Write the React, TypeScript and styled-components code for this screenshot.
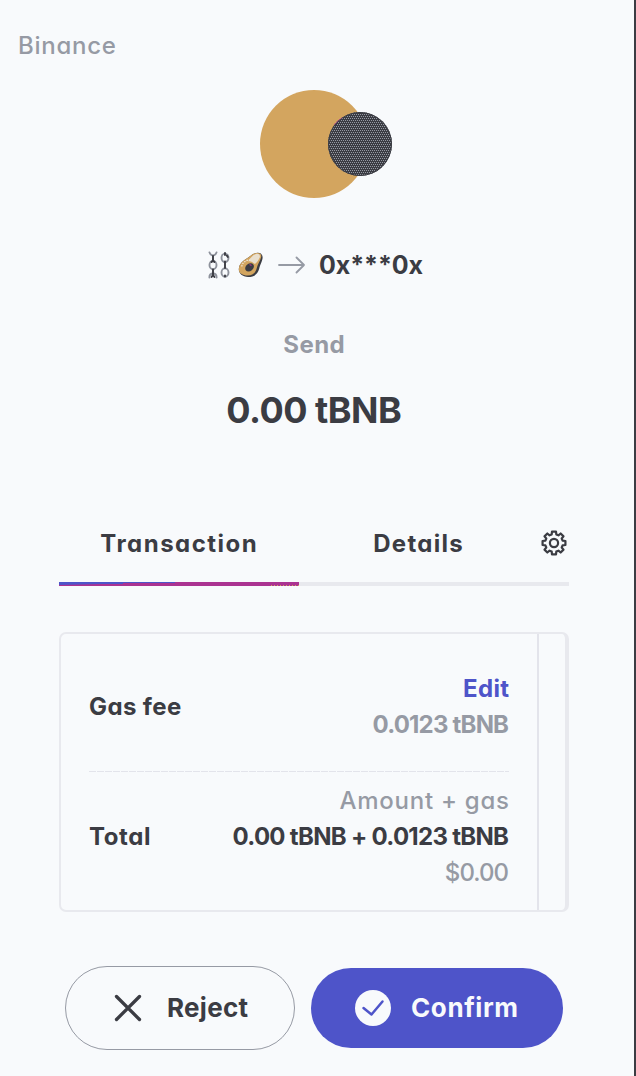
import React from "react";
import styled, { createGlobalStyle } from "styled-components";

const c = {
  bg: "#f8fafc",
  ink: "#3b3c43",
  muted: "#969aa4",
  line: "#e3e4eb",
  soft: "#e8e9ee",
  blue: "#4e54c9",
  pink: "#ab3391",
  gold: "#d3a55f",
};

const GlobalStyle = createGlobalStyle`
  * { box-sizing: border-box; }
  body { margin: 0; background: ${c.bg}; }
`;

const Page = styled.main`
  width: 636px;
  height: 1076px;
  padding: 28px 0 0;
  border-right: 2px solid ${c.ink};
  background: ${c.bg};
  color: ${c.ink};
  font-family: Inter, "Liberation Sans", sans-serif;
  font-feature-settings: "cv11";
  overflow: hidden;
`;

const Text = styled.span<{ $size?: number; $weight?: number; $track?: number; $color?: string; $line?: number }>`
  display: block;
  font-size: ${(p) => p.$size ?? 24}px;
  font-weight: ${(p) => p.$weight ?? 700};
  letter-spacing: ${(p) => p.$track ?? 0}px;
  margin-right: ${(p) => -(p.$track ?? 0)}px;
  color: ${(p) => p.$color ?? c.ink};
  line-height: ${(p) => p.$line ?? 36}px;
  white-space: nowrap;
`;

const Network = styled.header`
  padding-left: 18px;
`;

const Column = styled.section`
  width: 510px;
  margin-left: 59px;
  display: flex;
  flex-direction: column;
  align-items: center;
`;

const Avatar = styled.svg`
  display: block;
  margin: 26px 0 0 24px;
`;

const Route = styled.div`
  display: flex;
  align-items: center;
  height: 36px;
  margin-top: 49px;
  align-self: flex-start;
  padding-left: 149px;
`;

const Emoji = styled.span`
  display: flex;
  align-items: center;
  gap: 6px;
`;

const Arrow = styled.svg`
  margin: 0 14px 0 14px;
`;

const Kind = styled.div`
  margin-top: 44px;
`;

const Amount = styled.div`
  margin-top: 23px;
`;

const Tabs = styled.nav`
  display: grid;
  grid-template-columns: 239px 240px 31px;
  width: 100%;
  height: 77px;
  margin-top: 71px;
  align-items: center;
  justify-items: center;
`;

const Track = styled.div`
  width: 100%;
  height: 4px;
  background: ${c.soft};
`;

const Active = styled.div`
  width: 240px;
  height: 4px;
  background:
    repeating-linear-gradient(90deg, ${c.gold} 0 1px, transparent 1px 3px) right bottom / 28px 1px no-repeat,
    linear-gradient(${c.blue}, ${c.blue}) left top / 116px 1px no-repeat,
    linear-gradient(${c.blue}, ${c.blue}) left top / 64px 2px no-repeat,
    linear-gradient(90deg, ${c.blue}, ${c.pink}) left top / 42px 3px no-repeat,
    ${c.pink};
`;

const Card = styled.div`
  width: 100%;
  height: 280px;
  margin-top: 46px;
  padding-right: 26px;
  border: 2px solid ${c.soft};
  border-right-width: 4px;
  border-radius: 7px;
`;

const Sheet = styled.div`
  height: 100%;
  padding: 8px 28px 0;
  border-right: 2px solid ${c.line};
`;

const Row = styled.div<{ $height: number }>`
  display: flex;
  align-items: center;
  justify-content: space-between;
  height: ${(p) => p.$height}px;
`;

const Values = styled.div`
  display: flex;
  flex-direction: column;
  align-items: flex-end;
`;

const Divider = styled.div`
  height: 1px;
  background: repeating-linear-gradient(90deg, ${c.line} 0 7px, transparent 7px 8px);
`;

const Actions = styled.div`
  display: flex;
  align-items: center;
  gap: 16px;
  height: 84px;
  margin-top: 54px;
`;

const Button = styled.button<{ $primary?: boolean }>`
  display: flex;
  align-items: center;
  width: ${(p) => (p.$primary ? 252 : 230)}px;
  height: ${(p) => (p.$primary ? 80 : 84)}px;
  padding: 0 0 0 ${(p) => (p.$primary ? 44 : 47)}px;
  gap: ${(p) => (p.$primary ? 20 : 24)}px;
  border: ${(p) => (p.$primary ? "0" : `1.5px solid ${c.muted}`)};
  border-radius: 42px;
  background: ${(p) => (p.$primary ? c.blue : "transparent")};
  font-family: inherit;
  font-feature-settings: inherit;
`;

const gearPath = (() => {
  const points: string[] = [];
  for (let i = 0; i < 8; i++) {
    const base = i * 45 - 90;
    [[-15, 8.9], [-10, 11.6], [10, 11.6], [15, 8.9]].forEach(([a, r]) => {
      const t = ((base + a) * Math.PI) / 180;
      points.push(`${(13 + r * Math.cos(t)).toFixed(2)} ${(13 + r * Math.sin(t)).toFixed(2)}`);
    });
  }
  return `M${points.join("L")}Z`;
})();

const GearIcon = styled.svg`
  margin-bottom: 2px;
`;

const Gear = () => (
  <GearIcon width="26" height="26" viewBox="0 0 26 26" fill="none" stroke={c.ink} strokeWidth="2.2" strokeLinejoin="round">
    <path d={gearPath} />
    <circle cx="13" cy="13" r="4.1" />
  </GearIcon>
);

const Chains = () => (
  <svg width="24" height="28" viewBox="0 0 24 28" fill="none" strokeLinecap="round">
    <g stroke="#8d919b" strokeWidth="1.9">
      <path d="M1.500 1.500C2.500 4 4 4.500 5 4.500S7.500 4 8.500 1.500" />
      <ellipse cx="5" cy="14" rx="3.500" ry="4.200" />
      <path d="M1.400 26.500C1.400 23.500 3 22.500 5 22.500S8.600 23.500 8.600 26.500" />
      <ellipse cx="17" cy="6.800" rx="3.500" ry="4.200" />
      <ellipse cx="17" cy="21.500" rx="3.500" ry="4.200" />
    </g>
    <g stroke={c.ink} strokeWidth="1.900">
      <path d="M5 5v5M5 18.500v4.500M17 2v2M17 10.500v6.500M17 24.500v1" />
      <path d="M3.600 11l1.400-1.400L6.400 11M18.800 4.500l1 1.500M3.600 26l1.400-2 1.400 2" />
    </g>
  </svg>
);

const Avocado = () => (
  <svg width="26" height="28" viewBox="1 0 27 28">
    <path d="M20 1.500C24 .5 27 3 26.500 7C26 11 24 13 23 18C21.500 24 17 26.500 11.500 26.500C5 26.500 1 22 2 17C3 11 8 9 12 6C15 3.500 17 2 20 1.500Z" fill={c.ink} />
    <path d="M20 1.500C24 1 25.800 3 25 6C24 10 21.500 13 20.500 17C19 22.500 16 25 11 25C5 25 1 22 2 17C3 11 8 9 12 6C15 3.500 17 2 20 1.500Z" fill={c.gold} />
    <path d="M20 2.500C23 2 24.500 4 23.500 6.500C22.500 9 20 12 18.500 13C16 10.500 14 10 11.500 10C14.500 6 17 3 20 2.500Z" fill="#e9dfce" />
    <path d="M5 15.500C5 12 9 9 13 8.500" fill="none" stroke="#f2ece2" strokeWidth="1.200" strokeDasharray="1.500 1.200" />
    <ellipse cx="13" cy="16.500" rx="5" ry="3.800" transform="rotate(-38 13 16.500)" fill={c.ink} />
    <path d="M13 13.500l2 1" stroke={c.pink} strokeWidth="1.200" />
  </svg>
);

export default function App() {
  return (
    <>
      <GlobalStyle />
      <Page>
        <Network>
          <Text $weight={450} $color={c.muted} $track={0.75}>Binance</Text>
        </Network>
        <Column>
          <Avatar width="132" height="108" viewBox="0 0 132 108">
            <defs>
              <pattern id="dots" width="4" height="4" patternUnits="userSpaceOnUse">
                <rect width="4" height="4" fill={c.ink} />
                <path d="M0 0h1v1H0zM2 0h1v1H2zM1 2h1v1H1zM3 2h1v1H3z" fill={c.muted} />
              </pattern>
            </defs>
            <circle cx="54" cy="54" r="54" fill={c.gold} />
            <circle cx="100" cy="54" r="32" fill="url(#dots)" />
            <circle cx="100" cy="54" r="31.500" fill="none" stroke={c.ink} />
            <path d="M74.500 34.500A32 32 0 0 1 82 27.800" fill="none" stroke={c.pink} strokeDasharray="2 1" />
          </Avatar>
          <Route>
            <Emoji>
              <Chains />
              <Avocado />
            </Emoji>
            <Arrow width="27" height="18" viewBox="0 0 27 18" fill="none" stroke={c.muted} strokeWidth="1.800" strokeLinecap="round" strokeLinejoin="round">
              <path d="M1 9h25M18.500 1.500L26 9l-7.500 7.500" />
            </Arrow>
            <Text $size={25} $track={-0.1}>0x***0x</Text>
          </Route>
          <Kind><Text $color={c.muted} $track={0.4}>Send</Text></Kind>
          <Amount><Text $size={36} $line={48} $track={-0.5}>0.00 tBNB</Text></Amount>
          <Tabs>
            <Text $track={1.5}>Transaction</Text>
            <Text $track={1.3}>Details</Text>
            <Gear />
          </Tabs>
          <Track><Active /></Track>
          <Card>
            <Sheet>
              <Row $height={129}>
                <Text $track={0.4}>Gas fee</Text>
                <Values>
                  <Text $color={c.blue} $track={0.3}>Edit</Text>
                  <Text $color={c.muted} $track={-0.8}>0.0123 tBNB</Text>
                </Values>
              </Row>
              <Divider />
              <Row $height={129}>
                <Text $track={0.6}>Total</Text>
                <Values>
                  <Text $weight={450} $color={c.muted} $track={0.75}>Amount + gas</Text>
                  <Text $track={-0.7}>0.00 tBNB + 0.0123 tBNB</Text>
                  <Text $weight={450} $color={c.muted} $track={-0.95}>$0.00</Text>
                </Values>
              </Row>
            </Sheet>
          </Card>
          <Actions>
            <Button>
              <svg width="30" height="30" viewBox="0 0 30 30" fill="none" stroke={c.ink} strokeWidth="3.3" strokeLinecap="round">
                <path d="M3.500 3.500l23 23M26.500 3.500l-23 23" />
              </svg>
              <Text $size={26} $track={0.3}>Reject</Text>
            </Button>
            <Button $primary>
              <svg width="36" height="36" viewBox="0 0 36 36" fill="none">
                <circle cx="18" cy="18" r="18" fill={c.bg} />
                <path d="M8.500 18L16.500 24.500L27.500 11.500" stroke={c.blue} strokeWidth="2.500" strokeLinecap="round" strokeLinejoin="round" />
              </svg>
              <Text $size={26} $color={c.bg} $track={0.6}>Confirm</Text>
            </Button>
          </Actions>
        </Column>
      </Page>
    </>
  );
}
